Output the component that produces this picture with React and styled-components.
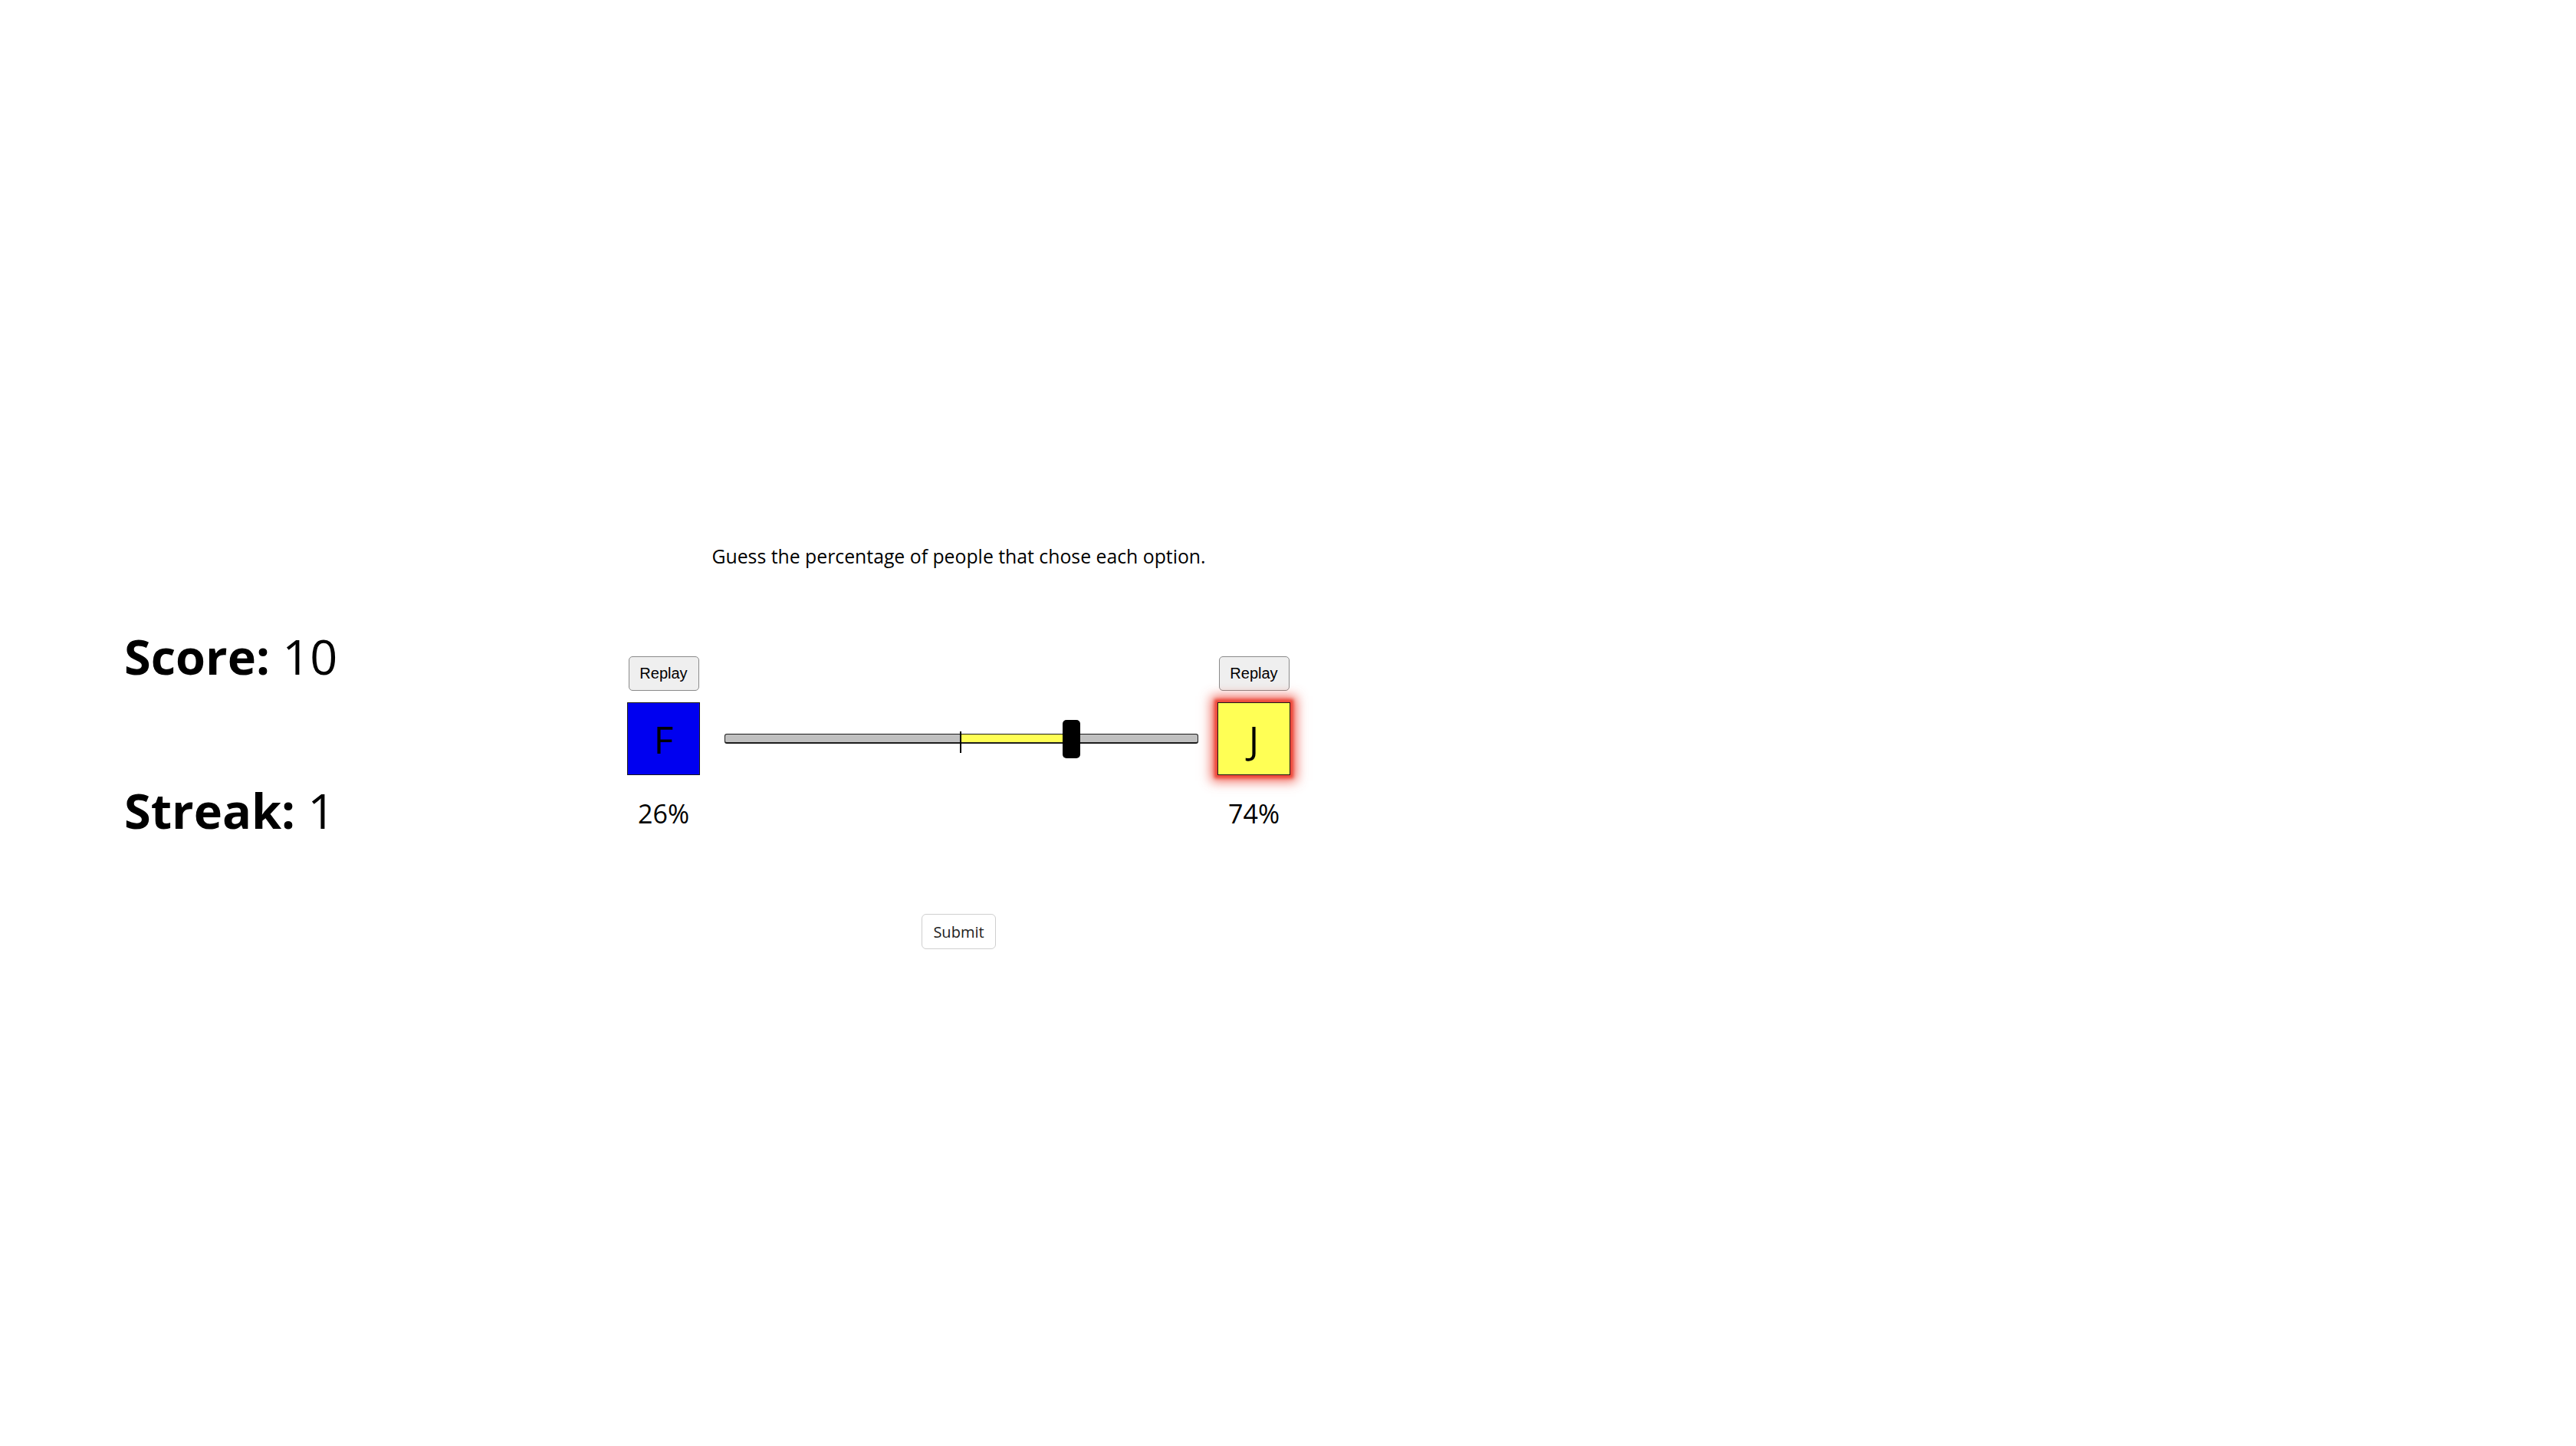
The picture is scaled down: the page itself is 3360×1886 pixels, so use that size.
import React from "react";
import styled, { createGlobalStyle } from "styled-components";

const GlobalStyle = createGlobalStyle`
  html, body {
    margin: 0;
    padding: 0;
    background: #ffffff;
    font-family: "Open Sans", "Liberation Sans", sans-serif;
    color: #000;
  }
`;

const Page = styled.div`
  display: flex;
  align-items: flex-start;
  padding: 708px 0 0 162px;
  min-height: 100vh;
  box-sizing: border-box;
`;

const ScorePanel = styled.div`
  width: 656px;
  padding-top: 105px;
`;

const ScoreLine = styled.p`
  margin: 0;
  font-size: 63px;
  line-height: normal;
  & + & {
    margin-top: 116px;
  }
`;

const Label = styled.b`
  font-weight: 700;
`;

const GameColumn = styled.div`
  width: 865px;
  display: flex;
  flex-direction: column;
  align-items: center;
`;

const Prompt = styled.p`
  margin: 0;
  font-size: 24.8px;
  line-height: normal;
`;

const Board = styled.div`
  margin-top: 114px;
  width: 100%;
  display: grid;
  grid-template-columns: 95px 1fr 95px;
  grid-template-rows: auto auto auto;
  justify-items: center;
`;

const ReplayButton = styled.button`
  grid-row: 1;
  grid-column: ${(p) => p.col};
  width: 92px;
  height: 45px;
  padding: 0;
  background: #efefef;
  border: 1.5px solid #8a8a8a;
  border-radius: 5px;
  font-family: "Liberation Sans", Arial, sans-serif;
  font-size: 20px;
  color: #000;
`;

const KeyBox = styled.div`
  grid-row: 2;
  grid-column: ${(p) => p.col};
  margin-top: 15px;
  width: 95px;
  height: 95px;
  box-sizing: border-box;
  border: 1.5px solid #1a1a1a;
  background: ${(p) => p.color};
  display: flex;
  align-items: center;
  justify-content: center;
  font-size: 50px;
  line-height: normal;
  box-shadow: ${(p) =>
    p.picked
      ? "0 0 4px 4px rgba(236, 70, 55, 1), 0 0 14px 8px rgba(236, 70, 55, 0.8)"
      : "none"};
`;

const Percent = styled.div`
  grid-row: 3;
  grid-column: ${(p) => p.col};
  margin-top: 27px;
  font-size: 34px;
  line-height: normal;
`;

const SliderArea = styled.div`
  grid-row: 2;
  grid-column: 2;
  align-self: center;
  justify-self: stretch;
  margin-top: 15px;
  padding: 0 25px 0 32px;
`;

const Track = styled.div`
  position: relative;
  height: 13px;
  box-sizing: border-box;
  background: #c0c0c0;
  border: 1.5px solid #1c1c1c;
  border-bottom-width: 2px;
  border-radius: 3px;
`;

const Fill = styled.div`
  position: absolute;
  top: 0;
  bottom: 0;
  background: #ffff55;
`;

const Tick = styled.div`
  position: absolute;
  top: -4px;
  width: 2px;
  height: 28px;
  background: #000;
`;

const Thumb = styled.div`
  position: absolute;
  top: -19px;
  width: 23px;
  height: 50px;
  background: #000;
  border-radius: 5px;
`;

const SubmitButton = styled.button`
  margin-top: 108px;
  width: 97px;
  height: 46px;
  padding: 0;
  background: #fff;
  border: 1.5px solid #cfcfcf;
  border-radius: 6px;
  font-family: "Open Sans", sans-serif;
  font-size: 20px;
  color: #222;
`;

const TRACK_W = 620;
const THUMB_W = 23;

function Slider({ value }) {
  const usable = TRACK_W - THUMB_W - 3;
  const thumbLeft = (value / 100) * usable;
  const mid = 0.5 * usable + THUMB_W / 2 - 2;
  return (
    <SliderArea>
      <Track>
        <Fill style={{ left: mid, width: thumbLeft - mid + 2 }} />
        <Tick style={{ left: mid - 1 }} />
        <Thumb style={{ left: thumbLeft }} />
      </Track>
    </SliderArea>
  );
}

export default function App() {
  const guess = 74;
  return (
    <>
      <GlobalStyle />
      <Page>
        <ScorePanel>
          <ScoreLine>
            <Label>Score:</Label> 10
          </ScoreLine>
          <ScoreLine>
            <Label>Streak:</Label> 1
          </ScoreLine>
        </ScorePanel>
        <GameColumn>
          <Prompt>Guess the percentage of people that chose each option.</Prompt>
          <Board>
            <ReplayButton col={1}>Replay</ReplayButton>
            <ReplayButton col={3}>Replay</ReplayButton>
            <KeyBox col={1} color="#0000f0">F</KeyBox>
            <Slider value={guess} />
            <KeyBox col={3} color="#ffff55" picked>
              J
            </KeyBox>
            <Percent col={1}>{100 - guess}%</Percent>
            <Percent col={3}>{guess}%</Percent>
          </Board>
          <SubmitButton>Submit</SubmitButton>
        </GameColumn>
      </Page>
    </>
  );
}
